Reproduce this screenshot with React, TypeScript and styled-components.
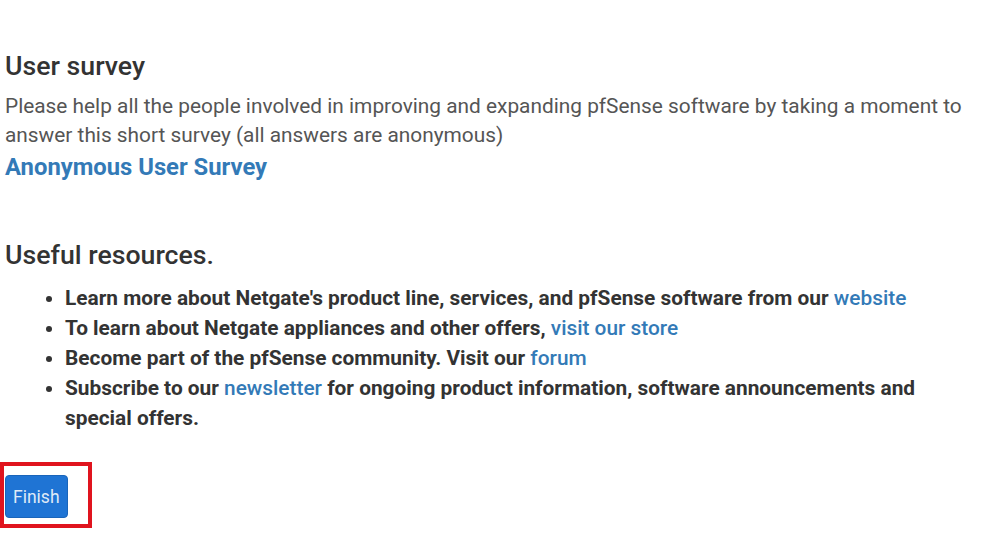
import styled, { createGlobalStyle } from 'styled-components';

const GlobalStyle = createGlobalStyle`
  body {
    margin: 0;
    background: #fff;
    font-family: Roboto, "Liberation Sans", sans-serif;
    color: #444;
  }
`;

const Page = styled.div`
  width: 970px;
  padding: 49px 0 0 5px;
`;

const Section = styled.section<{ $gap?: number }>`
  margin-bottom: ${(p) => p.$gap ?? 0}px;
`;

const Heading = styled.h3<{ $space: number }>`
  margin: 0 0 ${(p) => p.$space}px;
  font-size: 26.7px;
  font-weight: 500;
  color: #333;
  line-height: 35px;
`;

const Text = styled.p`
  margin: 0;
  font-size: 20.85px;
  line-height: 29px;
  color: #555;
`;

const BigLink = styled.a`
  display: inline-block;
  margin-top: 3px;
  font-size: 23.8px;
  line-height: 28px;
  font-weight: 700;
  color: #337ab7;
  text-decoration: none;
`;

const List = styled.ul`
  margin: 0;
  padding-left: 60px;
  font-size: 20.85px;
  line-height: 30px;
  font-weight: 700;
  color: #333;
`;

const Link = styled.a`
  color: #337ab7;
  font-weight: 500;
  text-decoration: none;
`;

const Highlight = styled.div`
  display: inline-block;
  margin-top: 29px;
  margin-left: -5px;
  padding: 9px 20px 6px 1px;
  border: 4px solid #e0141e;
`;

const Button = styled.button`
  height: 43px;
  background: #1f74d4;
  color: #dfeaf7;
  border: 1px solid #1a65ba;
  border-radius: 4px;
  font-family: Roboto, "Liberation Sans", sans-serif;
  font-size: 17.5px;
  padding: 0 7px;
  cursor: pointer;
`;

export default function App() {
  return (
    <>
      <GlobalStyle />
      <Page>
        <Section $gap={57}>
          <Heading $space={8}>User survey</Heading>
          <Text>
            Please help all the people involved in improving and expanding pfSense software by taking a moment to
            answer this short survey (all answers are anonymous)
          </Text>
          <BigLink href="#">Anonymous User Survey</BigLink>
        </Section>
        <Section>
          <Heading $space={10}>Useful resources.</Heading>
          <List>
            <li>
              Learn more about Netgate's product line, services, and pfSense software from our <Link href="#">website</Link>
            </li>
            <li>
              To learn about Netgate appliances and other offers, <Link href="#">visit our store</Link>
            </li>
            <li>
              Become part of the pfSense community. Visit our <Link href="#">forum</Link>
            </li>
            <li>
              Subscribe to our <Link href="#">newsletter</Link> for ongoing product information, software announcements and
              special offers.
            </li>
          </List>
        </Section>
        <Highlight>
          <Button>Finish</Button>
        </Highlight>
      </Page>
    </>
  );
}
